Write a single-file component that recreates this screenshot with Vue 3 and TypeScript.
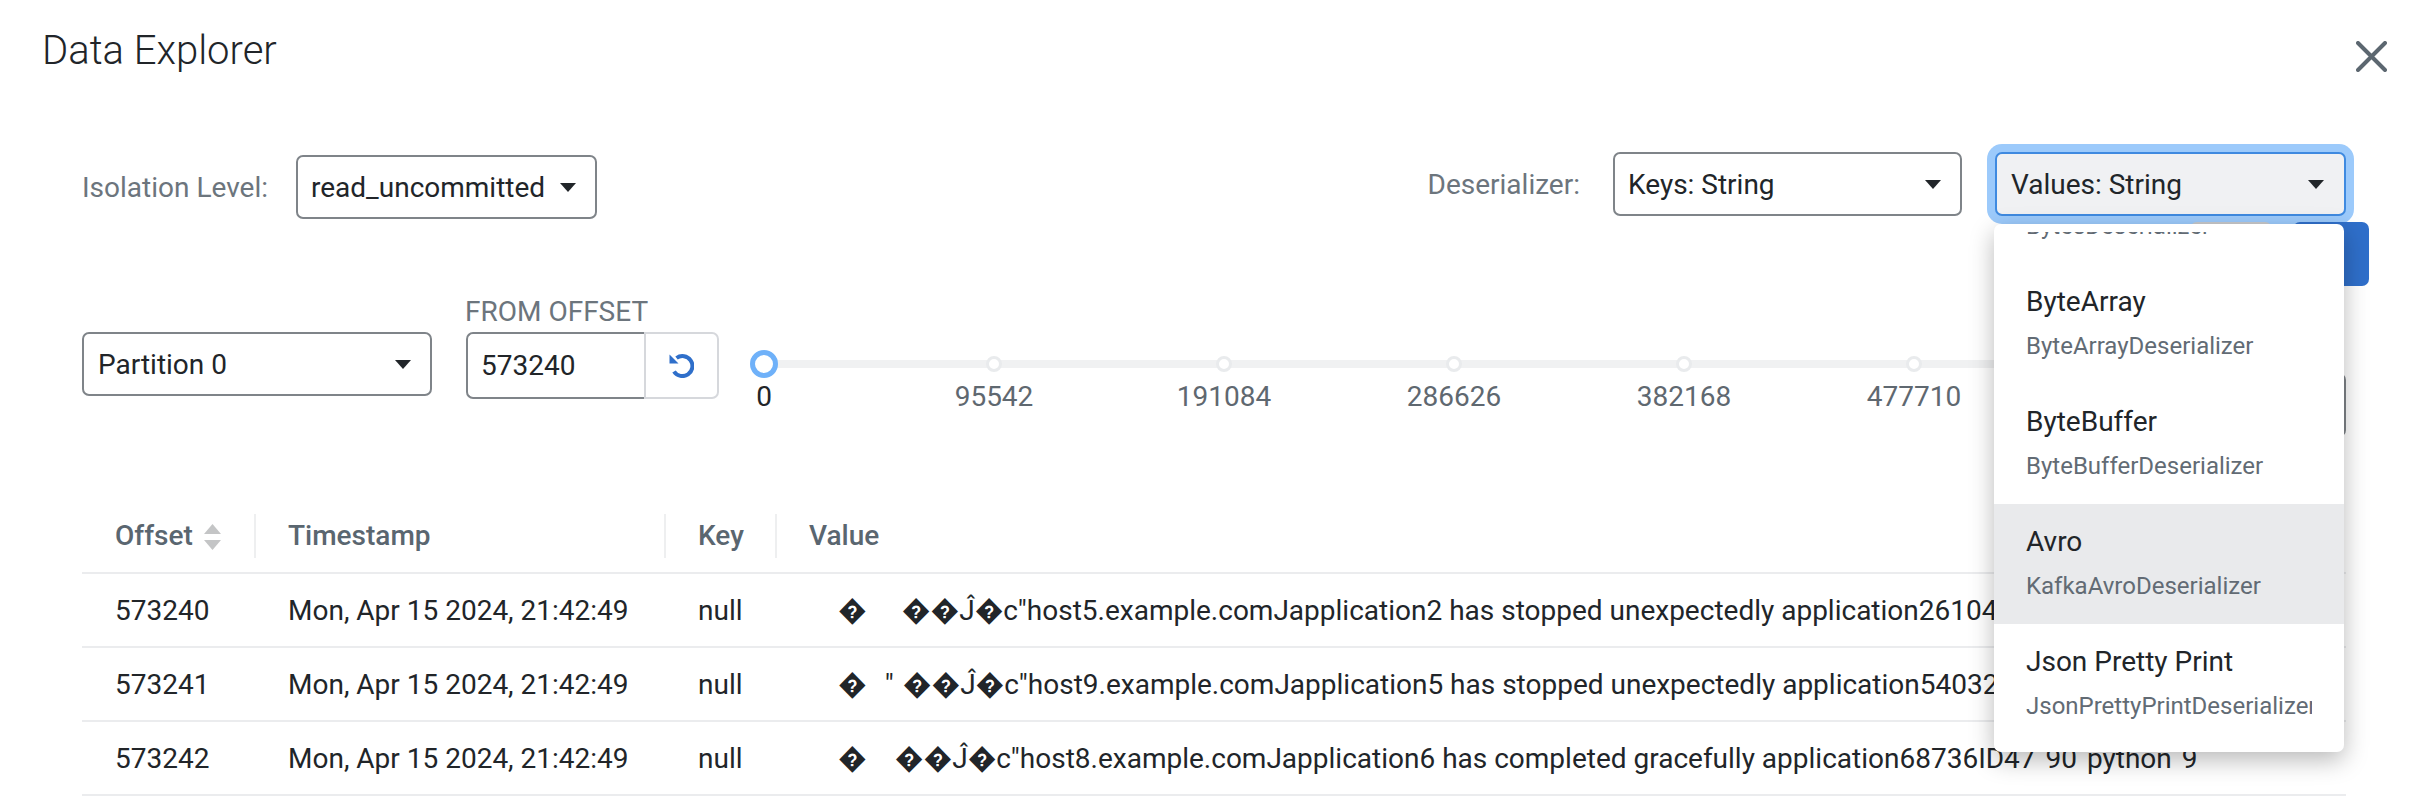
<script setup lang="ts">
interface Row {
  offset: string
  gapA: number
  mark: string
  gapB: number
  rest: string
  tail: string
}

const ticks = ['0', '95542', '191084', '286626', '382168', '477710', '573252']

const options = [
  { title: 'Bytes', sub: 'BytesDeserializer' },
  { title: 'ByteArray', sub: 'ByteArrayDeserializer' },
  { title: 'ByteBuffer', sub: 'ByteBufferDeserializer' },
  { title: 'Avro', sub: 'KafkaAvroDeserializer', active: true },
  { title: 'Json Pretty Print', sub: 'JsonPrettyPrintDeserializer' },
]

const rows: Row[] = [
  { offset: '573240', gapA: 35, mark: '', gapB: 0, rest: 'c"host5.example.comJapplication2 has stopped unexpectedly application26104', tail: 'ID47 90 python 9' },
  { offset: '573241', gapA: 18, mark: '"', gapB: 9, rest: 'c"host9.example.comJapplication5 has stopped unexpectedly application54032', tail: 'ID47 90 python 9' },
  { offset: '573242', gapA: 28, mark: '', gapB: 0, rest: 'c"host8.example.comJapplication6 has completed gracefully application68736', tail: 'ID47 90 python 9' },
]
</script>

<template>
  <div class="page">
    <header class="head">
      <h1 class="title">Data Explorer</h1>
      <button class="close" aria-label="Close">
        <svg width="31" height="31" viewBox="0 0 31 31">
          <path d="M2 2 L29 29 M29 2 L2 29" stroke="#5c6770" stroke-width="4" stroke-linecap="round" fill="none" />
        </svg>
      </button>
    </header>

    <section class="toolbar">
      <div class="iso">
        <span class="lbl">Isolation Level:</span>
        <div class="select iso-select">read_uncommitted<i class="caret"></i></div>
      </div>
      <div class="des">
        <span class="lbl">Deserializer:</span>
        <div class="select des-select">Keys: String<i class="caret"></i></div>
        <div class="values">
          <div class="select val-select focus">Values: String<i class="caret"></i></div>
          <div class="menu">
            <div class="menu-scroll">
              <div class="menu-inner">
                <div v-for="o in options" :key="o.title" class="item" :class="{ active: o.active }">
                  <div class="item-title">{{ o.title }}</div>
                  <div class="item-sub">{{ o.sub }}</div>
                </div>
              </div>
            </div>
          </div>
        </div>
      </div>
    </section>

    <section class="actions">
      <button class="btn-grey"></button>
      <button class="btn-blue"></button>
    </section>

    <section class="range">
      <div class="select part-select">Partition 0<i class="caret"></i></div>
      <div class="offset">
        <div class="offset-lbl">FROM OFFSET</div>
        <div class="group">
          <div class="input">573240</div>
          <button class="reload" aria-label="Reset">
            <svg width="25" height="25" viewBox="0 0 25 25">
              <path d="M5 18.5 A10 10 0 1 0 7.5 5" stroke="#2f6fca" stroke-width="4" fill="none" />
              <path d="M0.5 1.5 L0.5 10.5 L9.5 10.5 Z" fill="#2f6fca" />
            </svg>
          </button>
        </div>
      </div>
      <div class="slider">
        <div class="track"></div>
        <div
          v-for="(t, i) in ticks"
          :key="t"
          class="tick"
          :class="{ first: i === 0 }"
          :style="{ left: 45 + 230 * i + 'px' }"
        >
          <span class="dot"></span>
          <span class="tick-lbl">{{ t }}</span>
        </div>
      </div>
      <div class="hidden-select"></div>
    </section>

    <table class="grid">
      <colgroup>
        <col style="width: 173px" />
        <col style="width: 410px" />
        <col style="width: 111px" />
        <col />
      </colgroup>
      <thead>
        <tr>
          <th>
            Offset
            <svg class="sort" width="17" height="26" viewBox="0 0 17 26">
              <path d="M8.5 0 L17 10 L0 10 Z" fill="#c4c5c6" />
              <path d="M0 16 L17 16 L8.5 26 Z" fill="#c4c5c6" />
            </svg>
          </th>
          <th>Timestamp</th>
          <th>Key</th>
          <th>Value</th>
        </tr>
      </thead>
      <tbody>
        <tr v-for="r in rows" :key="r.offset">
          <td>{{ r.offset }}</td>
          <td>Mon, Apr 15 2024, 21:42:49</td>
          <td>null</td>
          <td>
            <span class="lead">�</span><span class="gap" :style="{ width: r.gapA + 'px' }"></span>{{ r.mark
            }}<span class="gap" :style="{ width: r.gapB + 'px' }"></span>��Ĵ�{{ r.rest }}<span class="tail">{{ r.tail }}</span>
          </td>
        </tr>
      </tbody>
    </table>
  </div>
</template>

<style>
html,
body {
  margin: 0;
  background: #fff;
}
</style>

<style scoped>
.page {
  width: 2420px;
  height: 808px;
  overflow: hidden;
  box-sizing: border-box;
  font-family: Roboto, 'Noto Sans', sans-serif;
  font-size: 28px;
  color: #212529;
  background: #fff;
}
.head {
  height: 152px;
  box-sizing: border-box;
  padding: 26px 33px 0 42px;
  display: flex;
  justify-content: space-between;
  align-items: flex-start;
}
.title {
  margin: 0;
  font-size: 40px;
  line-height: 50px;
  font-weight: 300;
}
.close {
  margin-top: 15px;
  padding: 0;
  border: 0;
  background: none;
  display: flex;
}
.toolbar {
  height: 70px;
  box-sizing: border-box;
  padding: 0 74px 0 82px;
  display: flex;
  justify-content: space-between;
  align-items: flex-start;
}
.iso {
  display: flex;
  align-items: center;
  gap: 28px;
  margin-top: 3px;
}
.des {
  display: flex;
  align-items: center;
}
.des .lbl {
  margin-right: 33px;
}
.lbl {
  color: #6c757d;
}
.select {
  box-sizing: border-box;
  height: 64px;
  border: 2px solid #7f8489;
  border-radius: 7px;
  padding: 0 14px 0 13px;
  display: flex;
  align-items: center;
  justify-content: space-between;
  background: #fff;
  white-space: nowrap;
}
.caret {
  width: 0;
  height: 0;
  margin-right: 5px;
  border-left: 8px solid transparent;
  border-right: 8px solid transparent;
  border-top: 9px solid #212529;
}
.iso-select {
  width: 301px;
}
.des-select {
  width: 349px;
}
.val-select {
  width: 351px;
  padding-left: 14px;
}
.val-select .caret {
  margin-right: 6px;
}
.values {
  position: relative;
  margin-left: 33px;
}
.focus {
  background: #f0f1f3;
  border-color: #3f8ae0;
  box-shadow: 0 0 0 8px #9ccafb;
}
.menu {
  position: absolute;
  z-index: 10;
  left: -1px;
  top: calc(100% + 8px);
  width: 350px;
  box-sizing: border-box;
  padding: 8px 0;
  background: #fff;
  border-radius: 7px;
  box-shadow: 0 8px 24px rgba(0, 0, 0, 0.28);
}
.menu-scroll {
  height: 512px;
  overflow: hidden;
}
.menu-inner {
  margin-top: -88px;
}
.item {
  height: 120px;
  box-sizing: border-box;
  padding: 17px 32px 0 32px;
}
.item.active {
  background: #e9eaec;
}
.item-title {
  line-height: 42px;
}
.item-sub {
  margin-top: 2px;
  line-height: 42px;
  font-size: 24px;
  color: #626b74;
  overflow: hidden;
  white-space: nowrap;
}
.actions {
  position: relative;
  height: 64px;
  box-sizing: border-box;
  padding-right: 51px;
  display: flex;
  justify-content: flex-end;
  gap: 21px;
}
.btn-grey,
.btn-blue {
  padding: 0;
  border: 0;
  border-radius: 7px;
}
.btn-grey {
  width: 82px;
  background: #c8c9cb;
}
.btn-blue {
  width: 76px;
  background: #2f6fca;
}
.range {
  margin-top: 10px;
  height: 150px;
  box-sizing: border-box;
  padding: 0 74px 0 82px;
  display: flex;
  align-items: flex-start;
}
.part-select {
  width: 350px;
  margin-top: 36px;
  padding-left: 14px;
}
.offset {
  margin-left: 34px;
  width: 253px;
}
.offset-lbl {
  height: 36px;
  margin-left: -1px;
  line-height: 32px;
  font-size: 28px;
  color: #6c757d;
  white-space: nowrap;
}
.group {
  height: 67px;
  display: flex;
}
.input {
  width: 178px;
  box-sizing: border-box;
  padding-left: 13px;
  display: flex;
  align-items: center;
  border: 2px solid #7f8489;
  border-right: 0;
  border-radius: 7px 0 0 7px;
}
.reload {
  width: 75px;
  padding: 0;
  display: flex;
  align-items: center;
  justify-content: center;
  background: #fff;
  border: 2px solid #d6d8dc;
  border-radius: 0 7px 7px 0;
}
.slider {
  position: relative;
  flex: 1;
  height: 130px;
}
.track {
  position: absolute;
  left: 45px;
  right: 0;
  top: 64px;
  height: 8px;
  background: #f0f1f2;
}
.tick {
  position: absolute;
  top: 68px;
  width: 0;
  display: flex;
  flex-direction: column;
  align-items: center;
}
.dot {
  box-sizing: border-box;
  flex: none;
  width: 16px;
  height: 16px;
  margin-top: -8px;
  border: 3px solid #e9ebed;
  border-radius: 50%;
  background: #fff;
}
.first .dot {
  width: 28px;
  height: 28px;
  margin-top: -14px;
  border: 5px solid #6fb1f9;
}
.tick-lbl {
  position: absolute;
  top: 15px;
  line-height: 36px;
  color: #5f6870;
}
.first .tick-lbl {
  color: #212529;
}
.hidden-select {
  width: 65px;
  height: 64px;
  margin-top: 77px;
  box-sizing: border-box;
  border: 2px solid #7f8489;
  border-left: 0;
  border-radius: 0 7px 7px 0;
}
.grid {
  margin: 68px 0 0 82px;
  width: 2264px;
  table-layout: fixed;
  border-collapse: separate;
  border-spacing: 0;
}
.grid th {
  position: relative;
  height: 60px;
  box-sizing: border-box;
  padding: 0 0 16px 33px;
  text-align: left;
  font-weight: 500;
  color: #5a6670;
  border-bottom: 2px solid #ebecee;
}
.grid th + th::before {
  content: '';
  position: absolute;
  left: -1px;
  top: 0;
  height: 44px;
  width: 2px;
  background: #eeeff0;
}
.sort {
  margin-left: 4px;
  vertical-align: -5px;
}
.grid td {
  height: 74px;
  box-sizing: border-box;
  padding: 0 0 0 33px;
  border-bottom: 2px solid #ebecee;
  white-space: nowrap;
  overflow: hidden;
}
.lead {
  margin-left: 29px;
}
.gap {
  display: inline-block;
}
.tail {
  word-spacing: 3px;
}
</style>
